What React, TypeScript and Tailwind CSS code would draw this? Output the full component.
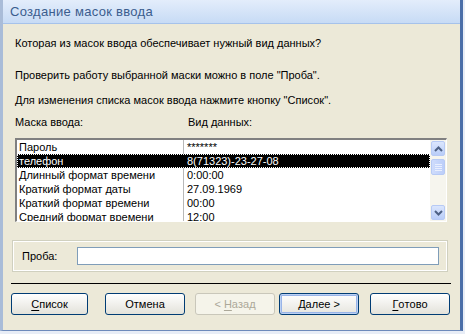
import React, { useState } from 'react';

const masks = [
  { name: 'Пароль', sample: '*******' },
  { name: 'телефон', sample: '8(71323)-23-27-08' },
  { name: 'Длинный формат времени', sample: '0:00:00' },
  { name: 'Краткий формат даты', sample: '27.09.1969' },
  { name: 'Краткий формат времени', sample: '00:00' },
  { name: 'Средний формат времени', sample: '12:00' },
];

const Arrow: React.FC<{ up?: boolean }> = ({ up }) => (
  <svg width="9" height="6" viewBox="0 0 9 6">
    <path
      d={up ? 'M1 5 L4.5 1.5 L8 5' : 'M1 1 L4.5 4.5 L8 1'}
      fill="none"
      stroke="#4d6185"
      strokeWidth="2"
    />
  </svg>
);

interface BtnProps {
  label: string;
  accel?: number;
  disabled?: boolean;
  primary?: boolean;
  prefix?: string;
  suffix?: string;
}

const XpButton: React.FC<BtnProps> = ({ label, accel, disabled, primary, prefix = '', suffix = '' }) => {
  const chars = label.split('');
  return (
    <button
      disabled={disabled}
      className={`h-[22px] w-[80px] rounded-[3px] border text-[11px] leading-none flex items-center justify-center whitespace-pre ${
        disabled
          ? 'border-[#c9c7ba] bg-[#f5f4ea] text-[#aca899]'
          : primary
          ? 'border-[#003c74] bg-gradient-to-b from-white to-[#e6e5de] text-black shadow-[inset_0_0_0_1px_#bcd1f3,inset_0_0_0_2px_#98b4e8]'
          : 'border-[#003c74] bg-gradient-to-b from-white to-[#e3e2da] text-black'
      }`}
    >
      {prefix && <span>{prefix}</span>}
      {chars.map((c, i) => (
        <span key={i} className={i === accel ? 'underline underline-offset-2' : ''}>
          {c}
        </span>
      ))}
      {suffix && <span>{suffix}</span>}
    </button>
  );
};

const App: React.FC = () => {
  const [selected, setSelected] = useState(1);
  const [probe, setProbe] = useState('');

  return (
    <div
      className="w-[465px] h-[334px] bg-[#e8edf6] overflow-hidden"
      style={{ fontFamily: '"Liberation Sans", Arial, sans-serif' }}
    >
      {/* Window */}
      <div className="w-[463px] h-[331px] flex flex-col border-l-[3px] border-l-[#a9bcd8] border-r-[3px] border-r-[#4a6ea8] border-b border-b-[#6d8abb] bg-[#ece9d8]">
        {/* Title bar */}
        <div className="h-[24px] shrink-0 flex items-center pl-[7px] bg-gradient-to-b from-[#e3edfb] to-[#c7dbf5] border-b border-[#a6c2ea]">
          <span className="text-[13px] text-[#3b5d8e] tracking-[0.3px]">Создание масок ввода</span>
        </div>

        {/* Body */}
        <div className="flex flex-col pl-[12px] pr-[10px] text-[11px] text-black">
          <p className="mt-[13px] h-[13px] leading-[13px]">Которая из масок ввода обеспечивает нужный вид данных?</p>
          <p className="mt-[19px] h-[13px] leading-[13px]">Проверить работу выбранной маски можно в поле "Проба".</p>
          <p className="mt-[12px] h-[13px] leading-[13px]">Для изменения списка масок ввода нажмите кнопку "Список".</p>

          <div className="mt-[9px] h-[13px] leading-[13px] flex">
            <span className="w-[173px]">Маска ввода:</span>
            <span>Вид данных:</span>
          </div>

          {/* List box */}
          <div className="mt-[9px] w-[432px] h-[84px] border-t-2 border-l-2 border-t-[#808080] border-l-[#808080] border-r border-b border-r-white border-b-white flex bg-white">
            <div className="flex-1 flex flex-col overflow-hidden relative">
              <div className="absolute top-0 bottom-0 left-[166px] w-px bg-[#b8b8b8]" />
              {masks.map((m, i) => (
                <div
                  key={m.name}
                  onClick={() => setSelected(i)}
                  className={`h-[14px] shrink-0 flex items-center leading-none relative ${
                    i === selected ? 'bg-black text-white outline-1 outline-dotted outline-offset-[-1px] outline-white' : ''
                  }`}
                >
                  <span className="w-[167px] pl-[2px] whitespace-nowrap">{m.name}</span>
                  <span className="pl-[3px] whitespace-nowrap">{m.sample}</span>
                </div>
              ))}
            </div>
            {/* Scrollbar */}
            <div className="w-[16px] flex flex-col bg-[#f6f5ee]">
              <div className="h-[15px] m-px rounded-[2px] border border-[#b7caf5] bg-gradient-to-b from-[#dbe6fd] to-[#b9cdf8] flex items-center justify-center">
                <Arrow up />
              </div>
              <div className="h-[16px] mx-px mt-[2px] rounded-[2px] border border-[#b7caf5] bg-gradient-to-r from-[#cfdcfc] to-[#bccef9] flex flex-col items-center justify-center gap-[1px]">
                <div className="w-[7px] h-px bg-[#e9efff]" />
                <div className="w-[7px] h-px bg-[#e9efff]" />
                <div className="w-[7px] h-px bg-[#e9efff]" />
                <div className="w-[7px] h-px bg-[#e9efff]" />
              </div>
              <div className="flex-1" />
              <div className="h-[15px] m-px rounded-[2px] border border-[#b7caf5] bg-gradient-to-b from-[#dbe6fd] to-[#b9cdf8] flex items-center justify-center">
                <Arrow />
              </div>
            </div>
          </div>

          {/* Probe group */}
          <div className="mt-[18px] -ml-[3px] w-[436px] h-[32px] border border-[#d0d0bf] shadow-[inset_0_0_0_1px_white] flex items-center pl-[9px]">
            <span className="w-[55px]">Проба:</span>
            <input
              value={probe}
              onChange={(e) => setProbe(e.target.value)}
              className="w-[362px] h-[18px] border border-[#7f9db9] bg-white outline-none px-1 text-[11px]"
            />
          </div>

          {/* Separator */}
          <div className="mt-[11px] -ml-[4px] w-[440px] h-px bg-black" />

          {/* Buttons */}
          <div className="mt-[9px] -ml-[4px] flex">
            <XpButton label="Список" accel={0} />
            <div className="ml-[17px]">
              <XpButton label="Отмена" />
            </div>
            <div className="ml-[10px]">
              <XpButton label="Назад" accel={0} prefix={'<\u00a0'} disabled />
            </div>
            <div className="ml-[4px]">
              <XpButton label="Далее" accel={0} suffix={'\u00a0>'} primary />
            </div>
            <div className="ml-[11px]">
              <XpButton label="Готово" accel={0} />
            </div>
          </div>
        </div>
      </div>
    </div>
  );
};

export default App;
